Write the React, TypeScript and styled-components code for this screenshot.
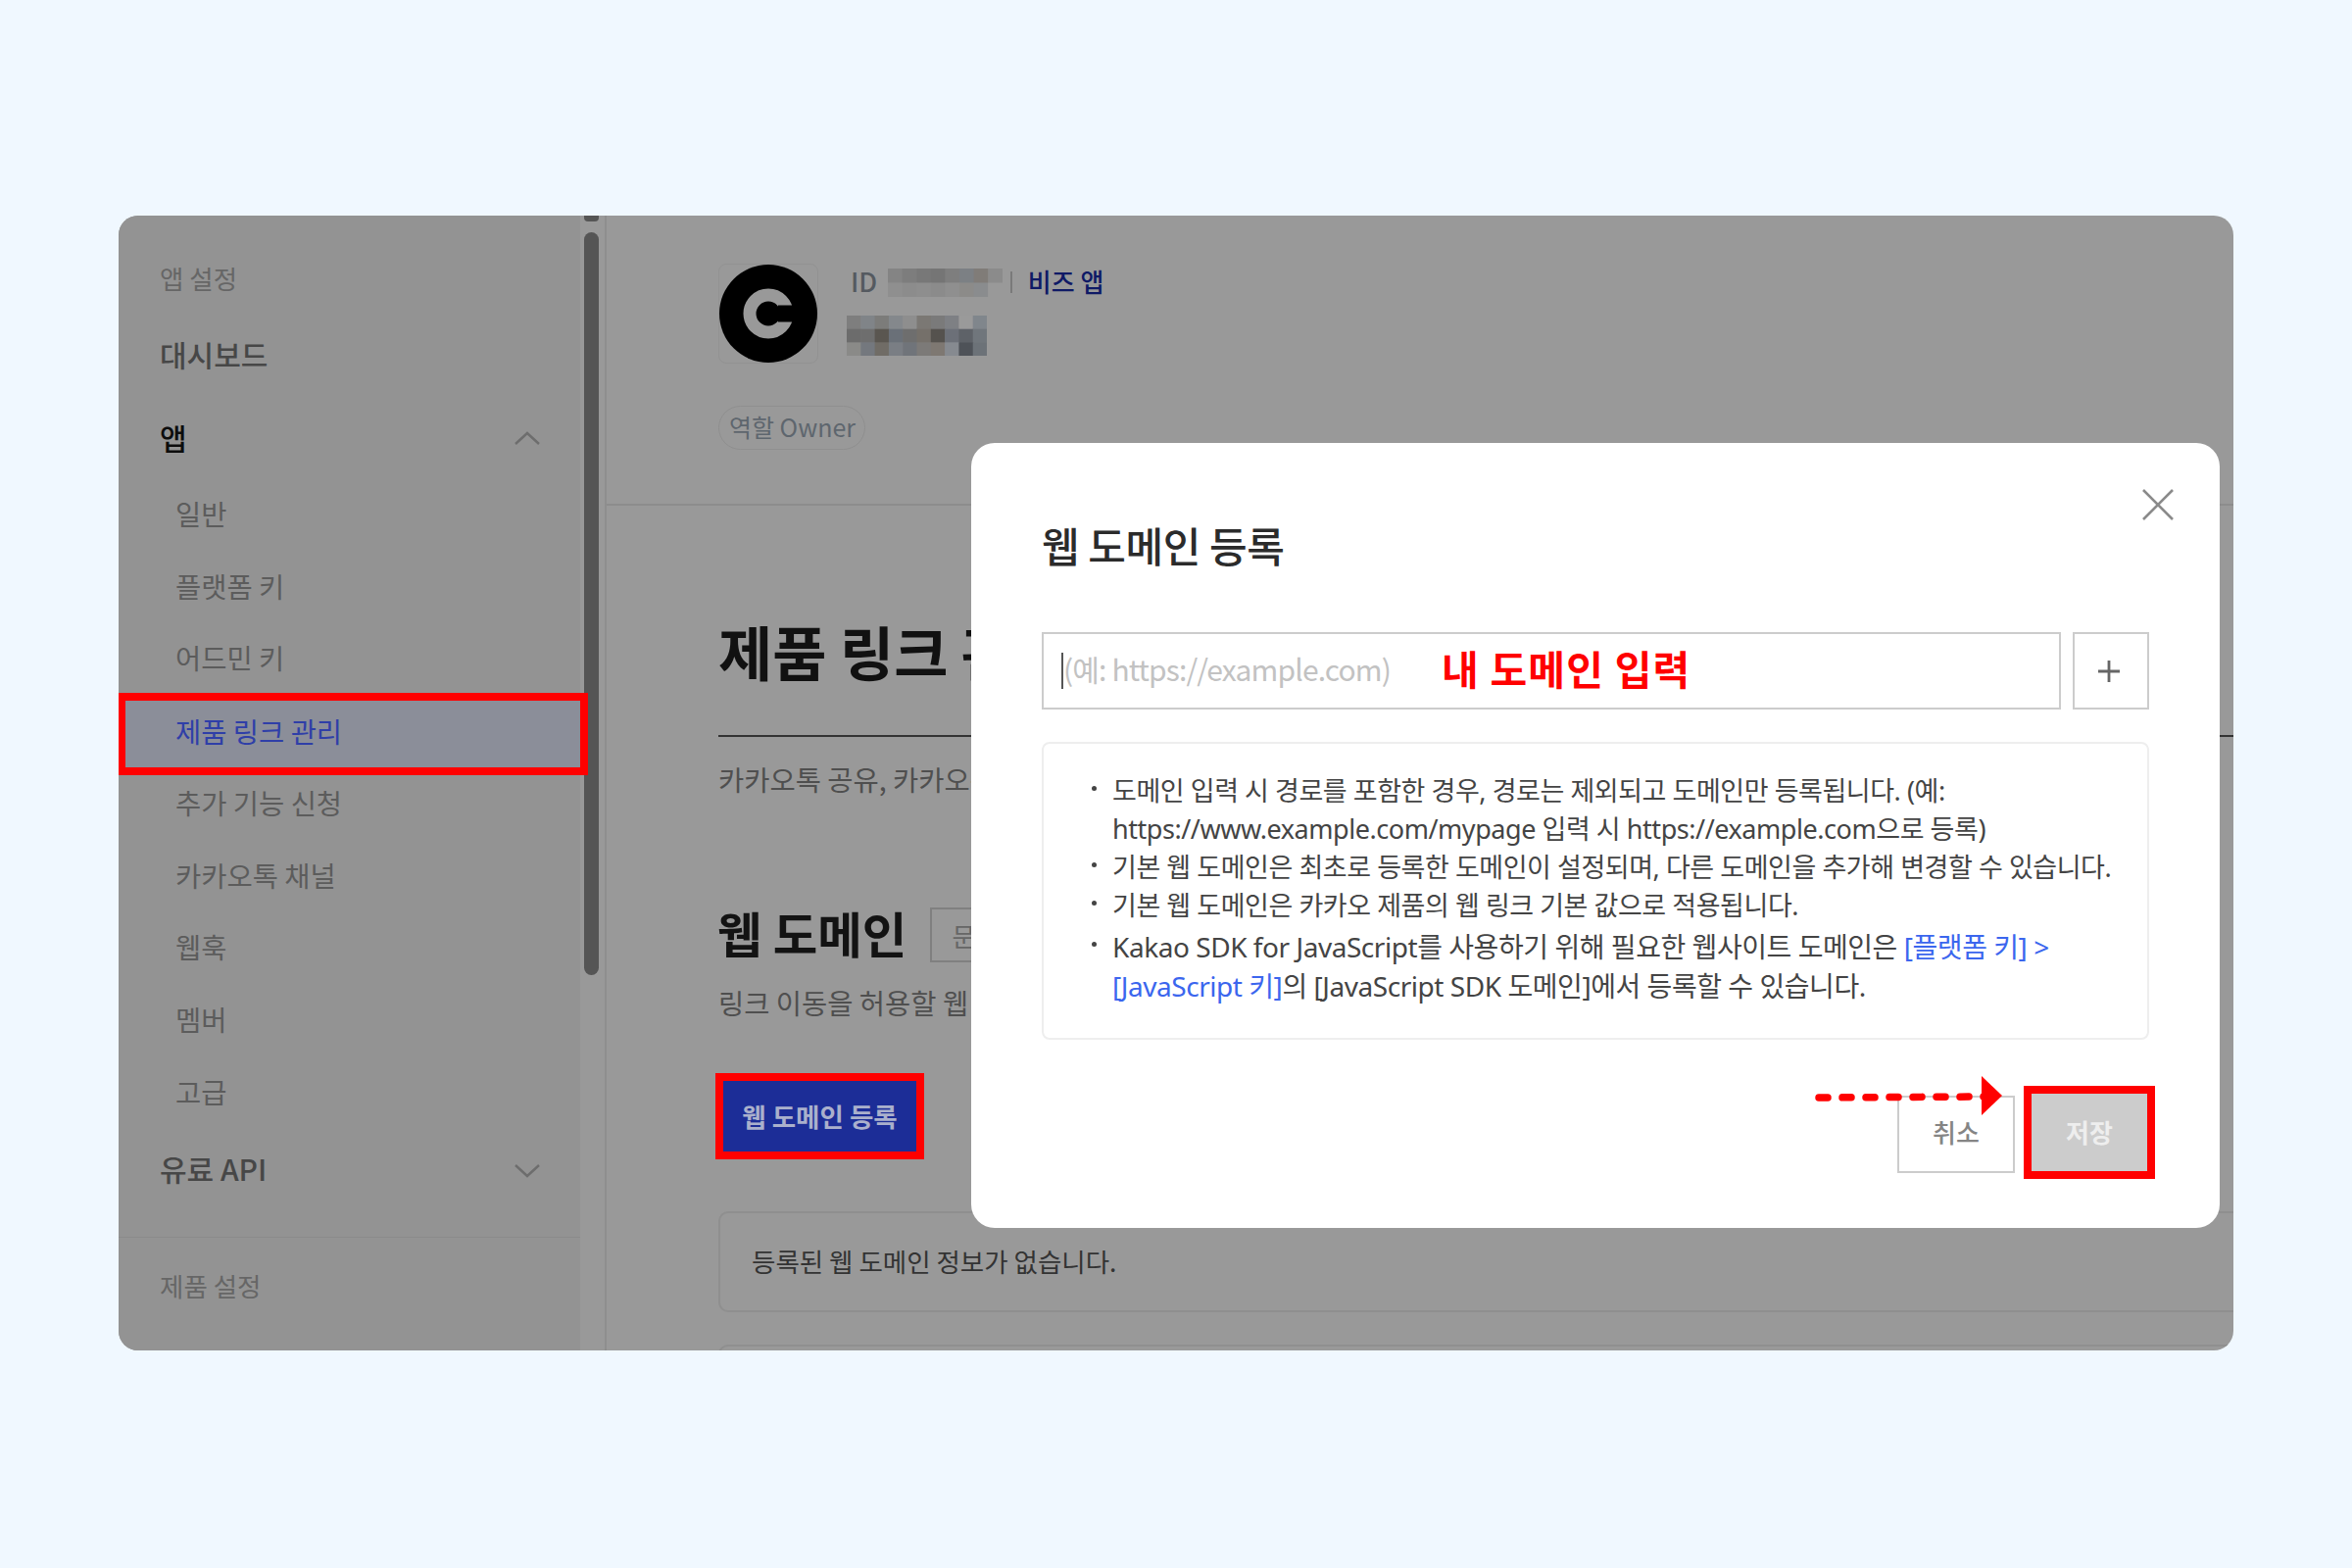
import styled, { createGlobalStyle } from 'styled-components'

const GlobalStyle = createGlobalStyle`
	* {
		box-sizing: border-box;
	}
	body {
		margin: 0;
		background: #f0f8ff;
		font-family: "Noto Sans CJK KR", "Noto Sans", sans-serif;
	}
`

const Page = styled.div`
	width: 2400px;
	height: 1600px;
	padding: 220px 121px 222px 121px;
	background: #f0f8ff;
`

const Shot = styled.div`
	position: relative;
	display: grid;
	grid-template-columns: 471px 25px 1fr;
	height: 1158px;
	border-radius: 20px;
	overflow: hidden;
	background: #999;
`

const Sidebar = styled.nav`
	padding-top: 43px;
	background: #939393;
`

const SectionLabel = styled.div<{ $top?: number }>`
	display: flex;
	align-items: center;
	height: 44px;
	margin-top: ${p => p.$top ?? 0}px;
	padding-left: 42px;
	padding-bottom: 3px;
	font-size: 26.5px;
	color: #666;
`

const TopItem = styled.div<{ $top: number; $open?: boolean }>`
	display: flex;
	align-items: center;
	justify-content: space-between;
	height: 60px;
	margin-top: ${p => p.$top}px;
	padding: 0 41px 4px 42px;
	font-size: 30px;
	font-weight: 500;
	color: ${p => (p.$open ? '#0d0d0d' : '#474747')};
`

const SubList = styled.div`
	margin-top: 11px;
`

const SubItem = styled.div<{ $active?: boolean }>`
	position: relative;
	z-index: ${p => (p.$active ? 2 : 0)};
	display: flex;
	align-items: center;
	height: ${p => (p.$active ? '68px' : '73.75px')};
	margin: ${p => (p.$active ? '4.65px 0 1.1px 7px' : '0')};
	padding-left: ${p => (p.$active ? '51px' : '58px')};
	padding-bottom: ${p => (p.$active ? '7px' : '5px')};
	font-size: 28.5px;
	color: ${p => (p.$active ? '#2f3fa8' : '#5c5c5c')};
	background: ${p => (p.$active ? '#8b8e99' : 'transparent')};
	outline: ${p => (p.$active ? '8px solid #ff0000' : 'none')};
`

const SideDivider = styled.div`
	height: 1px;
	margin-top: 38px;
	background: #8b8b8b;
`

const ScrollTrack = styled.div`
	display: flex;
	flex-direction: column;
	gap: 11px;
	padding-left: 4px;
	background: #999;
`

const ScrollStub = styled.div`
	width: 15px;
	height: 6px;
	border-radius: 0 0 4px 4px;
	background: #555;
`

const ScrollThumb = styled.div`
	width: 15px;
	height: 758px;
	border-radius: 8px;
	background: #555;
`

const Main = styled.main`
	border-left: 2px solid #8e8e8e;
	min-width: 0;
	overflow: hidden;
`

const AppHeader = styled.header`
	height: 296px;
	padding: 49px 0 0 114px;
	border-bottom: 2px solid #8c8c8c;
`

const AppRow = styled.div`
	display: flex;
	gap: 30px;
`

const LogoBox = styled.div`
	display: flex;
	align-items: center;
	justify-content: center;
	width: 102px;
	height: 102px;
	border: 1px solid #929292;
	border-radius: 8px;
`

const AppInfo = styled.div`
	padding-top: 1px;
`

const IdLine = styled.div`
	display: flex;
	align-items: center;
	height: 36px;
	font-size: 27px;
	color: #555a60;
`

const IdLabel = styled.span`
	width: 38px;
	margin: -4px 0 0 3px;
	font-weight: 500;
`

const Pipe = styled.span`
	width: 2px;
	height: 22px;
	margin: 0 16px 0 8px;
	background: #7a7a7a;
`

const BizTag = styled.span`
	margin-top: -4px;
	font-size: 26px;
	font-weight: 500;
	color: #0f1a66;
`

const MosaicSvg = styled.svg`
	display: block;
	flex: none;
`

const idCells = [
	['#848484', '#7d7d7d', '#787878', '#757575', '#7e7e7e', '#7c8084', '#807c78', '#8b8b8b'],
	['#8f8f8f', '#8c8c8c', '#8e8e8e', '#8b8b8b', '#8f8f8f', '#8c8b89', '#8a8c8e', '#999'],
]

const nameCells = [
	['#7e7e7e', '#808488', '#7c7c7a', '#84888c', '#8e8e8e', '#7b7874', '#7a7a7a', '#7e8084', '#9a9a9a', '#80868c'],
	['#6c6c6c', '#6e6e6e', '#5a5650', '#6a7078', '#6e6e6e', '#75706a', '#55524e', '#6c7078', '#5e6268', '#70767c'],
	['#8a8a88', '#74787e', '#706c66', '#7a7e84', '#70747a', '#7c7a78', '#7e7872', '#868a90', '#4e5258', '#6c7278'],
]

const Mosaic = ({ cells, cw, ch, className }: { cells: string[][]; cw: number; ch: number; className?: string }) => (
	<MosaicSvg className={className} width={cells[0].length * cw} height={cells.length * ch}>
		{cells.map((row, y) =>
			row.map((fill, x) => <rect key={`${x}-${y}`} x={x * cw} y={y * ch} width={cw + 0.5} height={ch + 0.5} fill={fill} />),
		)}
	</MosaicSvg>
)

const NameMosaic = styled(Mosaic)`
	margin-top: 16px;
	margin-left: -1px;
`

const RoleBadge = styled.div`
	display: inline-flex;
	align-items: center;
	height: 45px;
	margin-top: 43px;
	padding: 0 9px 3px 10px;
	border: 1px solid #8f8f8f;
	border-radius: 23px;
	font-size: 25px;
	color: #5e666e;
`

const Content = styled.div`
	padding-left: 114px;
`

const PageTitle = styled.h1`
	display: flex;
	align-items: center;
	height: 70px;
	margin: 115px 0 0;
	padding-bottom: 6px;
	font-size: 60px;
	font-weight: 700;
	color: #111;
	white-space: nowrap;
`

const TitleRule = styled.div`
	height: 2px;
	margin-top: 49px;
	background: #333;
`

const Lead = styled.p<{ $top: number }>`
	display: flex;
	align-items: center;
	height: 40px;
	margin: ${p => p.$top}px 0 0;
	padding-bottom: 2px;
	font-size: 28.5px;
	color: #4f4f4f;
	white-space: nowrap;
`

const SectionRow = styled.div`
	display: flex;
	align-items: center;
	gap: 24px;
	height: 56px;
	margin-top: 111px;
`

const SectionTitle = styled.h2`
	margin: 0 0 0 -1px;
	padding-bottom: 6px;
	font-size: 49.5px;
	font-weight: 700;
	color: #131313;
	white-space: nowrap;
`

const DocButton = styled.div`
	display: flex;
	align-items: center;
	height: 56px;
	padding: 0 20px;
	border: 2px solid #808080;
	font-size: 26px;
	color: #666;
	white-space: nowrap;
`

const PrimaryButton = styled.div`
	display: flex;
	align-items: center;
	justify-content: center;
	width: 197px;
	height: 72px;
	margin: 60px 0 0 5px;
	padding-bottom: 2px;
	font-size: 26.5px;
	font-weight: 700;
	color: #aab0cc;
	background: #1c2d97;
	outline: 8px solid #ff0000;
`

const EmptyBox = styled.div`
	display: flex;
	align-items: center;
	height: 103px;
	margin-top: 61px;
	margin-right: -20px;
	padding-left: 32px;
	padding-bottom: 3px;
	border: 2px solid #8f8f8f;
	border-radius: 10px;
	font-size: 26.5px;
	color: #333;
`

const NextBox = styled.div`
	height: 100px;
	margin-top: 33px;
	margin-right: -20px;
	border: 2px solid #8f8f8f;
	border-radius: 10px;
`

const Modal = styled.div`
	position: absolute;
	left: 870px;
	top: 232px;
	width: 1274px;
	height: 801px;
	padding: 81px 72px 0;
	border-radius: 24px;
	background: #fff;
`

const CloseButton = styled.div`
	position: absolute;
	top: 47px;
	right: 47px;
	width: 32px;
	height: 32px;
`

const ModalTitle = styled.h3`
	display: flex;
	align-items: center;
	height: 50px;
	margin: 0;
	padding-bottom: 5px;
	font-size: 42px;
	font-weight: 500;
	letter-spacing: -0.4px;
	color: #2b2b2b;
`

const InputRow = styled.div`
	display: flex;
	gap: 12px;
	height: 79px;
	margin-top: 62px;
`

const InputBox = styled.div`
	display: flex;
	align-items: center;
	width: 1040px;
	padding-left: 18px;
	border: 2px solid #ccc;
`

const Caret = styled.span`
	width: 2px;
	height: 37px;
	background: #555;
`

const Placeholder = styled.span`
	width: 332px;
	margin-bottom: 6px;
	font-size: 30px;
	letter-spacing: -0.85px;
	color: #c2c2c2;
	white-space: nowrap;
`

const RedNote = styled.span`
	margin: 0 0 7px 54px;
	font-size: 41px;
	font-weight: 700;
	letter-spacing: 1.2px;
	color: #ff0000;
	white-space: nowrap;
`

const AddButton = styled.div`
	display: flex;
	align-items: center;
	justify-content: center;
	width: 78px;
	padding-right: 4px;
	border: 2px solid #ccc;
`

const InfoBox = styled.ul`
	height: 304px;
	margin: 33px 0 0;
	padding: 28px 0 0 49px;
	border: 2px solid #eee;
	border-radius: 8px;
	list-style: none;
`

const InfoItem = styled.li<{ $top?: number; $tall?: boolean }>`
	display: flex;
	gap: 16px;
	margin-top: ${p => p.$top ?? 0}px;
	font-family: "Noto Sans", "Noto Sans CJK KR", sans-serif;
	font-size: ${p => (p.$tall ? '28px' : '27px')};
	line-height: ${p => (p.$tall ? '40px' : '39px')};
	letter-spacing: -0.45px;
	color: #444;
`

const Bullet = styled.span`
	flex: none;
	width: 5px;
	height: 5px;
	margin-top: 15px;
	border-radius: 50%;
	background: #444;
`

const InfoLink = styled.span`
	color: #3b66ee;
`

const ModalFooter = styled.div`
	display: flex;
	justify-content: flex-end;
	gap: 17px;
	margin-top: 57px;
	padding-right: 2px;
`

const CancelButton = styled.div`
	display: flex;
	align-items: center;
	justify-content: center;
	width: 120px;
	height: 79px;
	padding-bottom: 6px;
	border: 2px solid #ccc;
	font-size: 26px;
	font-weight: 500;
	color: #858585;
`

const SaveButton = styled.div`
	display: flex;
	align-items: center;
	justify-content: center;
	width: 118px;
	height: 79px;
	margin-top: -2px;
	padding-bottom: 2px;
	font-size: 26px;
	font-weight: 700;
	color: #eee;
	background: #ccc;
	outline: 8px solid #ff0000;
`

const ArrowMark = styled.svg`
	position: absolute;
	left: 861px;
	top: 646px;
`

const ChevronSvg = styled.svg<{ $drop: number }>`
	margin-top: ${p => p.$drop}px;
`

const Chevron = ({ up }: { up?: boolean }) => (
	<ChevronSvg $drop={up ? 2 : 6} width="26" height="14" viewBox="0 0 26 14" fill="none">
		<polyline points={up ? '1,13 13,2 25,13' : '1,1 13,12 25,1'} stroke="#6d6d6d" strokeWidth="2.4" />
	</ChevronSvg>
)

const subItems = ['일반', '플랫폼 키', '어드민 키', '제품 링크 관리', '추가 기능 신청', '카카오톡 채널', '웹훅', '멤버', '고급']

const App = () => {
	return (
		<Page>
			<GlobalStyle />
			<Shot>
				<Sidebar>
					<SectionLabel>앱 설정</SectionLabel>
					<TopItem $top={26}>대시보드</TopItem>
					<TopItem $top={25} $open>
						앱
						<Chevron up />
					</TopItem>
					<SubList>
						{subItems.map(item => (
							<SubItem key={item} $active={item === '제품 링크 관리'}>
								{item}
							</SubItem>
						))}
					</SubList>
					<TopItem $top={11}>
						유료 API
						<Chevron />
					</TopItem>
					<SideDivider />
					<SectionLabel $top={28}>제품 설정</SectionLabel>
					<TopItem $top={27}>카카오 로그인</TopItem>
				</Sidebar>
				<ScrollTrack>
					<ScrollStub />
					<ScrollThumb />
				</ScrollTrack>
				<Main>
					<AppHeader>
						<AppRow>
							<LogoBox>
								<svg width="100" height="100" viewBox="0 0 100 100">
									<circle cx="50" cy="50" r="50" fill="#000" />
									<circle cx="50" cy="50" r="19" fill="none" stroke="#999" strokeWidth="13" />
									<rect x="60" y="41.5" width="20" height="17" fill="#000" />
								</svg>
							</LogoBox>
							<AppInfo>
								<IdLine>
									<IdLabel>ID</IdLabel>
									<Mosaic cells={idCells} cw={14.6} ch={14.5} />
									<Pipe />
									<BizTag>비즈 앱</BizTag>
								</IdLine>
								<NameMosaic cells={nameCells} cw={14.3} ch={13.7} />
							</AppInfo>
						</AppRow>
						<RoleBadge>역할 Owner</RoleBadge>
					</AppHeader>
					<Content>
						<PageTitle>제품 링크 관리</PageTitle>
						<TitleRule />
						<Lead $top={23}>카카오톡 공유, 카카오톡 메시지 등에서 사용할 제품 링크를 관리합니다.</Lead>
						<SectionRow>
							<SectionTitle>웹 도메인</SectionTitle>
							<DocButton>문서 보기</DocButton>
						</SectionRow>
						<Lead $top={21}>링크 이동을 허용할 웹 도메인을 등록합니다.</Lead>
						<PrimaryButton>웹 도메인 등록</PrimaryButton>
						<EmptyBox>등록된 웹 도메인 정보가 없습니다.</EmptyBox>
						<NextBox />
					</Content>
				</Main>
				<Modal>
					<CloseButton>
						<svg width="32" height="32" viewBox="0 0 32 32" fill="none">
							<path d="M1 1 L31 31 M31 1 L1 31" stroke="#8a8a8a" strokeWidth="2.6" />
						</svg>
					</CloseButton>
					<ModalTitle>웹 도메인 등록</ModalTitle>
					<InputRow>
						<InputBox>
							<Caret />
							<Placeholder>(예: https://example.com)</Placeholder>
							<RedNote>내 도메인 입력</RedNote>
						</InputBox>
						<AddButton>
							<svg width="24" height="24" viewBox="0 0 24 24" fill="none">
								<path d="M12 1 V23 M1 12 H23" stroke="#666" strokeWidth="2.8" />
							</svg>
						</AddButton>
					</InputRow>
					<InfoBox>
						<InfoItem>
							<Bullet />
							<span>
								도메인 입력 시 경로를 포함한 경우, 경로는 제외되고 도메인만 등록됩니다. (예:
								<br />
								https://www.example.com/mypage 입력 시 https://example.com으로 등록)
							</span>
						</InfoItem>
						<InfoItem>
							<Bullet />
							<span>기본 웹 도메인은 최초로 등록한 도메인이 설정되며, 다른 도메인을 추가해 변경할 수 있습니다.</span>
						</InfoItem>
						<InfoItem>
							<Bullet />
							<span>기본 웹 도메인은 카카오 제품의 웹 링크 기본 값으로 적용됩니다.</span>
						</InfoItem>
						<InfoItem $top={3} $tall>
							<Bullet />
							<span>
								Kakao SDK for JavaScript를 사용하기 위해 필요한 웹사이트 도메인은 <InfoLink>[플랫폼 키] &gt;</InfoLink>
								<br />
								<InfoLink>[JavaScript 키]</InfoLink>의 [JavaScript SDK 도메인]에서 등록할 수 있습니다.
							</span>
						</InfoItem>
					</InfoBox>
					<ModalFooter>
						<CancelButton>취소</CancelButton>
						<SaveButton>저장</SaveButton>
					</ModalFooter>
					<ArrowMark width="192" height="40" viewBox="0 0 192 40" fill="none">
						<line x1="4" y1="22" x2="172" y2="21" stroke="#ff0000" strokeWidth="7.5" strokeLinecap="round" strokeDasharray="9 15" />
						<polygon points="170,0 191,20 170,40" fill="#ff0000" />
					</ArrowMark>
				</Modal>
			</Shot>
		</Page>
	)
}

export default App
